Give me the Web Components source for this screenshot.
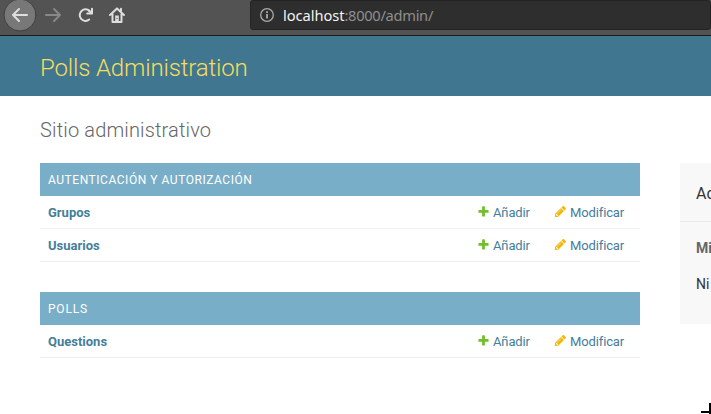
<!DOCTYPE html>
<html lang="es"><head><meta charset="utf-8"><title>Polls Administration</title>
<style>html,body{margin:0;width:711px;height:414px;overflow:hidden;background:#fff;font-family:Roboto,"Liberation Sans",sans-serif}</style></head>
<body><admin-app></admin-app>
<script>
const define=(name,html)=>{
  const t=document.createElement('template');t.innerHTML=html;
  customElements.define(name,class extends HTMLElement{
    constructor(){super();this.attachShadow({mode:'open'}).append(t.content.cloneNode(true));}
  });
};
define('browser-bar',`<style>
:host{display:flex;box-sizing:border-box;height:36px;background:#535353;border-bottom:1px solid #1c1c1c;overflow:hidden}
svg{display:block;flex:none}
.url{margin-left:110px;width:480px;height:30px;box-sizing:border-box;border:1px solid #242424;border-radius:3px;background:#2e2e2e;display:flex;align-items:center;padding-left:9px;gap:9px;font:14.67px/20px "Noto Sans",sans-serif;color:#8f8f8f;white-space:pre;letter-spacing:-.3px}
b{font-weight:400;color:#f4f4f4;letter-spacing:-.05px}
</style>
<svg width="140" height="35" viewBox="0 0 140 35" fill="none" stroke="#dededd" stroke-width="2" stroke-linecap="round" stroke-linejoin="round">
<circle cx="20" cy="15" r="16" fill="#787878" stroke="#3f3f3f" stroke-width="1"/>
<path d="M27 15H13M19 9l-6 6 6 6"/>
<path d="M46 15h14M54 9l6 6-6 6" stroke="#888"/>
<path d="M89.6 11A5.8 5.8 0 1 0 89.2 19.6"/><path d="M92 8.8v4.8h-4.8M92 13.6l-3.4-3.4"/>
<path d="M110 15l7-6.6 7 6.6M112.5 14v8h9v-8"/><path d="M121 8.8v2"/><path d="M115.2 15.5h3.6v6h-3.6z" fill="#dededd" stroke="none"/><path d="M117 18v1" stroke="#535353" stroke-width="1" stroke-linecap="butt"/>
</svg>
<div class="url"><svg width="14" height="14" viewBox="0 0 14 14" fill="none" stroke="#aaa"><circle cx="7" cy="7" r="6.3" stroke-width="1.3"/><path d="M7 6v4.6M7 3.2v1.7" stroke-width="1.8"/></svg><span><b>localhost</b>:8000/admin/</span></div>`);
define('site-header',`<style>
:host{display:flex;align-items:center;box-sizing:border-box;height:60px;padding:3px 40px 0;background:#417690;color:#f5dd5d}
h1{margin:0;font-size:24px;line-height:28px;font-weight:300;letter-spacing:-.15px}
</style><h1><slot></slot></h1>`);
define('model-row',`<style>
:host{display:grid;grid-template-columns:1fr 77px 78px;height:33px;box-sizing:border-box;border-bottom:1px solid #eee;padding:9px 8px 7px;font-size:13px;line-height:16px;color:#447e9b}
.name{font-weight:700}
.a{display:flex;gap:3px;white-space:nowrap;letter-spacing:-.13px}
svg{display:block;flex:none}
</style><span class="name"><slot></slot></span>
<span class="a"><svg width="13" height="13" viewBox="0 0 1792 1792"><path fill="#70bf2b" d="M1600 796v192q0 40-28 68t-68 28h-416v416q0 40-28 68t-68 28h-192q-40 0-68-28t-28-68v-416h-416q-40 0-68-28t-28-68v-192q0-40 28-68t68-28h416v-416q0-40 28-68t68-28h192q40 0 68 28t28 68v416h416q40 0 68 28t28 68z"/></svg>Añadir</span>
<span class="a"><svg width="13" height="13" viewBox="0 0 1792 1792"><path fill="#efb80b" d="M491 1536l91-91-235-235-91 91v107h128v128h107zm523-928q0-22-22-22-10 0-17 7l-542 542q-7 7-7 17 0 22 22 22 10 0 17-7l542-542q7-7 7-17zm-54-192l416 416-832 832h-416v-416zm683 96q0 53-37 90l-166 166-416-416 166-165q36-38 90-38 53 0 91 38l235 234q37 39 37 91z"/></svg>Modificar</span>`);
define('app-module',`<style>
:host{display:block;margin-bottom:30px}
h2{margin:0;box-sizing:border-box;height:33px;padding:9px 8px 7px;background:#79aec8;color:#fff;font-size:12px;line-height:17px;font-weight:400;letter-spacing:var(--caps-spacing,.54px);text-transform:uppercase}
</style><h2><slot name="title"></slot></h2><slot></slot>`);
define('recent-actions',`<style>
:host{display:block;box-sizing:border-box;height:161px;background:#f8f8f8;color:#333;white-space:nowrap;overflow:hidden}
h2{margin:0;box-sizing:border-box;height:59px;padding:21px 0 18px 16px;border-bottom:1px solid #eaeaea;font-size:16px;line-height:19px;font-weight:400}
h3{margin:17px 0 0 16px;font-size:14px;line-height:18px;font-weight:700;color:#666}
p{margin:18px 0 0 16px;font-size:14px;line-height:18px}
</style><h2>Ac</h2><h3>Mi</h3><p>Ni</p>`);
define('cross-cursor',`<style>:host{position:absolute;left:701px;top:403px;width:10px;height:11px;overflow:hidden}svg{display:block}</style>
<svg width="10" height="11" viewBox="0 0 10 11"><path d="M0 8h8V0h2v11H8v-1H0z"/></svg>`);
define('admin-app',`<style>
:host{display:block;height:414px;overflow:hidden}
main{padding:21px 0 0 40px}
h1{margin:0 0 19px;font-size:20px;line-height:27px;font-weight:300;color:#666;letter-spacing:.15px}
.cols{display:grid;grid-template-columns:600px 300px;gap:40px;align-items:start}
.wide{--caps-spacing:.8px}
</style>
<browser-bar></browser-bar><site-header>Polls Administration</site-header>
<main><h1>Sitio administrativo</h1><div class="cols"><div>
<app-module><span slot="title">Autenticación y autorización</span><model-row>Grupos</model-row><model-row>Usuarios</model-row></app-module>
<app-module class="wide"><span slot="title">Polls</span><model-row>Questions</model-row></app-module>
</div><recent-actions></recent-actions></div></main><cross-cursor></cross-cursor>`);
</script></body></html>
